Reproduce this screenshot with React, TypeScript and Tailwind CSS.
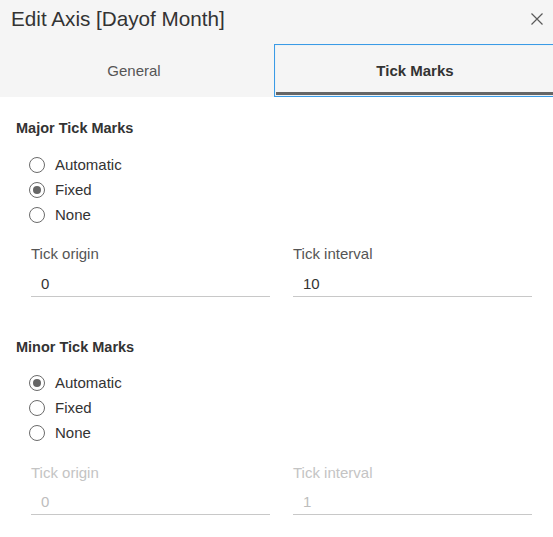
import React from "react";

const font = { fontFamily: '"Liberation Sans", Arial, sans-serif' };

function Radio({ label, checked }: { label: string; checked?: boolean }) {
  return (
    <div className="flex h-[25px] items-center">
      <div className="flex h-[16px] w-[16px] items-center justify-center rounded-full border border-[#6b6b6b] bg-white">
        {checked && <div className="h-[8px] w-[8px] rounded-full bg-[#666666]" />}
      </div>
      <span className="ml-[10px] text-[15px] leading-[20px] text-[#333333]">{label}</span>
    </div>
  );
}

function Field({ label, value, disabled }: { label: string; value: string; disabled?: boolean }) {
  return (
    <div className="w-[239px]">
      <div className={`text-[15px] leading-[20px] ${disabled ? "text-[#c4c4c4]" : "text-[#555555]"}`}>{label}</div>
      <div className={`${disabled ? "mt-[2px]" : "mt-[3px]"} flex h-[30px] items-center border-b border-[#c8c8c8] pl-[10px] pt-[4px]`}>
        <span className={`text-[15px] leading-[20px] ${disabled ? "text-[#bdbdbd]" : "text-[#333333]"}`}>{value}</span>
      </div>
    </div>
  );
}

function Section({
  title,
  selected,
  origin,
  interval,
  disabled,
  first,
}: {
  title: string;
  selected: number;
  origin: string;
  interval: string;
  disabled?: boolean;
  first?: boolean;
}) {
  return (
    <div className={first ? "" : "mt-[40px]"}>
      <div className="text-[14.5px] font-bold leading-[20px] text-[#333333]">{title}</div>
      <div className={`${first ? "mt-[14px]" : "mt-[13px]"} pl-[13px]`}>
        <Radio label="Automatic" checked={selected === 0} />
        <Radio label="Fixed" checked={selected === 1} />
        <Radio label="None" checked={selected === 2} />
      </div>
      <div className={`${first ? "mt-[17px]" : "mt-[18px]"} flex gap-[23px] pl-[15px]`}>
        <Field label="Tick origin" value={origin} disabled={disabled} />
        <Field label="Tick interval" value={interval} disabled={disabled} />
      </div>
    </div>
  );
}

export default function App() {
  return (
    <div className="h-[537px] w-[553px] overflow-hidden bg-white" style={font}>
      <div className="bg-[#f5f5f5]">
        <div className="flex h-[44px] items-start justify-between pl-[11px] pr-[10px] pt-[7px]">
          <div className="text-[20.7px] leading-[23px] text-[#333333]">Edit Axis [Dayof Month]</div>
          <svg width="12" height="12" viewBox="0 0 12 12" className="mt-[6px]">
            <path d="M0.5 0.5 L11.5 11.5 M11.5 0.5 L0.5 11.5" stroke="#5a5a5a" strokeWidth="1.2" fill="none" />
          </svg>
        </div>
        <div className="flex h-[53px] overflow-hidden">
          <div className="flex w-[274px] shrink-0 items-center justify-center pr-[6px] pt-[2px] text-[15px] text-[#555555]">
            General
          </div>
          <div className="relative flex h-[53px] w-[284px] shrink-0 items-center justify-center border border-[#3a9be6] pr-[2px] pt-[2px] text-[15px] font-bold text-[#333333] shadow-[inset_0_0_1px_#9fd0f5]">
            Tick Marks
            <div className="absolute bottom-[1px] left-[1px] right-0 h-[3px] bg-[#666666]" />
          </div>
        </div>
      </div>
      <div className="px-[16px] pt-[21px]">
        <Section title="Major Tick Marks" selected={1} origin="0" interval="10" first />
        <Section title="Minor Tick Marks" selected={0} origin="0" interval="1" disabled />
      </div>
    </div>
  );
}
